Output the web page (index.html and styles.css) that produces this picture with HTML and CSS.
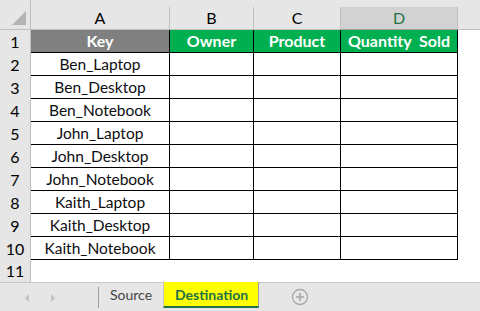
FILE: index.html
```html
<!DOCTYPE html>
<html lang="en">
<head>
    <meta charset="UTF-8">
    <title>Destination</title>
    <link rel="stylesheet" href="styles.css">
</head>
<body>
    <div class="sheet">
        <div class="grid">
            <div class="corner"><span class="corner-mark"></span></div>
            <div class="col-head">A</div>
            <div class="col-head">B</div>
            <div class="col-head">C</div>
            <div class="col-head selected">D</div>
            <div class="col-head rest"></div>

            <div class="row-head">1</div>
            <div class="cell title key">Key</div>
            <div class="cell title">Owner</div>
            <div class="cell title">Product</div>
            <div class="cell title">Quantity&nbsp; Sold</div>
            <div class="blank"></div>

            <div class="row-head">2</div>
            <div class="cell">Ben_Laptop</div>
            <div class="cell"></div><div class="cell"></div><div class="cell"></div>
            <div class="blank"></div>

            <div class="row-head">3</div>
            <div class="cell">Ben_Desktop</div>
            <div class="cell"></div><div class="cell"></div><div class="cell"></div>
            <div class="blank"></div>

            <div class="row-head">4</div>
            <div class="cell">Ben_Notebook</div>
            <div class="cell"></div><div class="cell"></div><div class="cell"></div>
            <div class="blank"></div>

            <div class="row-head">5</div>
            <div class="cell">John_Laptop</div>
            <div class="cell"></div><div class="cell"></div><div class="cell"></div>
            <div class="blank"></div>

            <div class="row-head">6</div>
            <div class="cell">John_Desktop</div>
            <div class="cell"></div><div class="cell"></div><div class="cell"></div>
            <div class="blank"></div>

            <div class="row-head">7</div>
            <div class="cell">John_Notebook</div>
            <div class="cell"></div><div class="cell"></div><div class="cell"></div>
            <div class="blank"></div>

            <div class="row-head">8</div>
            <div class="cell">Kaith_Laptop</div>
            <div class="cell"></div><div class="cell"></div><div class="cell"></div>
            <div class="blank"></div>

            <div class="row-head">9</div>
            <div class="cell">Kaith_Desktop</div>
            <div class="cell"></div><div class="cell"></div><div class="cell"></div>
            <div class="blank"></div>

            <div class="row-head">10</div>
            <div class="cell">Kaith_Notebook</div>
            <div class="cell"></div><div class="cell"></div><div class="cell"></div>
            <div class="blank"></div>

            <div class="row-head last">11</div>
            <div class="empty-row"></div>
        </div>

        <div class="tabs">
            <div class="tab-nav">
                <span class="arrow left"></span>
                <span class="arrow right"></span>
            </div>
            <div class="tab">Source</div>
            <div class="tab active">Destination</div>
            <div class="tab-add">
                <svg width="18" height="18" viewBox="0 0 18 18">
                    <circle cx="9" cy="9" r="7.5" fill="none" stroke="#a6a6a6" stroke-width="1.3"/>
                    <path d="M9 5v8M5 9h8" stroke="#a6a6a6" stroke-width="1.6"/>
                </svg>
            </div>
        </div>
    </div>
</body>
</html>
```

FILE: styles.css
```css
:root {
    --head-bg: #e6e6e6;
    --head-line: #bfbfbf;
    --cell-line: #000000;
    --green: #00b050;
    --grey-title: #808080;
    --tab-green: #217346;
}

* {
    margin: 0;
    padding: 0;
    box-sizing: border-box;
}

body {
    font-family: Lato, "Open Sans", sans-serif;
    background: #ffffff;
    color: #000000;
}

.sheet {
    width: 480px;
    height: 311px;
    display: flex;
    flex-direction: column;
    overflow: hidden;
}

.grid {
    display: grid;
    grid-template-columns: 31px 139px 84px 87px 117px 1fr;
    grid-template-rows: 30px repeat(10, 23px) 22px;
    background: #ffffff;
}

/* column headers */
.corner {
    background: var(--head-bg);
    border-right: 1px solid var(--head-line);
    border-bottom: 1px solid var(--head-line);
    position: relative;
}

.corner-mark {
    position: absolute;
    right: 4px;
    bottom: 4px;
    width: 0;
    height: 0;
    border-left: 14px solid transparent;
    border-bottom: 14px solid #b4b4b4;
}

.col-head {
    background: var(--head-bg);
    border-right: 1px solid var(--head-line);
    border-bottom: 1px solid var(--head-line);
    font-size: 16px;
    line-height: 22px;
    padding-top: 7px;
    text-align: center;
    color: #000000;
    background-clip: padding-box;
    position: relative;
}

.col-head::before {
    content: "";
    position: absolute;
    top: 0;
    right: -1px;
    width: 1px;
    height: 7px;
    background: var(--head-bg);
}

.col-head.selected {
    background: linear-gradient(var(--head-bg) 7px, #d2d2d2 7px);
    color: var(--tab-green);
    border-bottom-color: #a0a0a0;
}

.col-head.rest {
    border-right: none;
}

/* rows */
.row-head {
    background: var(--head-bg);
    border-right: 1px solid var(--head-line);
    font-size: 16px;
    line-height: 23px;
    text-align: center;
    color: #000000;
}

.row-head.last {
    line-height: 22px;
}

.cell {
    border-right: 1px solid var(--cell-line);
    border-bottom: 1px solid var(--cell-line);
    font-size: 15.5px;
    line-height: 22px;
    text-align: center;
    white-space: nowrap;
    color: #0d0d12;
}

.cell.title {
    background: var(--green);
    color: #ffffff;
    font-weight: bold;
    font-size: 16px;
}

.cell.key {
    background: var(--grey-title);
}

.empty-row {
    grid-column: 2 / 7;
}

/* sheet tabs */
.tabs {
    flex: 1;
    display: flex;
    align-items: flex-start;
    background: var(--head-bg);
    border-top: 1px solid #c6c6c6;
    font-size: 14px;
}

.tab-nav {
    width: 99px;
    height: 21px;
    margin-top: 4px;
    display: flex;
    align-items: center;
    gap: 22px;
    padding-left: 25px;
    border-right: 1px solid #9e9e9e;
}

.arrow {
    width: 0;
    height: 0;
    border-top: 4px solid transparent;
    border-bottom: 4px solid transparent;
}

.arrow.left {
    border-right: 4px solid #c0c0c0;
}

.arrow.right {
    border-left: 4px solid #c0c0c0;
}

.tab {
    height: 25px;
    line-height: 24px;
    padding: 0 11px;
    color: #444444;
}

.tab.active {
    background: #ffff00;
    color: var(--tab-green);
    font-weight: bold;
    padding: 0 10px 0 11px;
    border-left: 1px solid #c6c6c6;
    border-right: 1px solid #9e9e9e;
    border-bottom: 2px solid var(--tab-green);
    margin-top: -1px;
    height: 26px;
    line-height: 25px;
}

.tab-add {
    margin-left: 32px;
    margin-top: 5px;
    width: 18px;
    height: 18px;
}
```
